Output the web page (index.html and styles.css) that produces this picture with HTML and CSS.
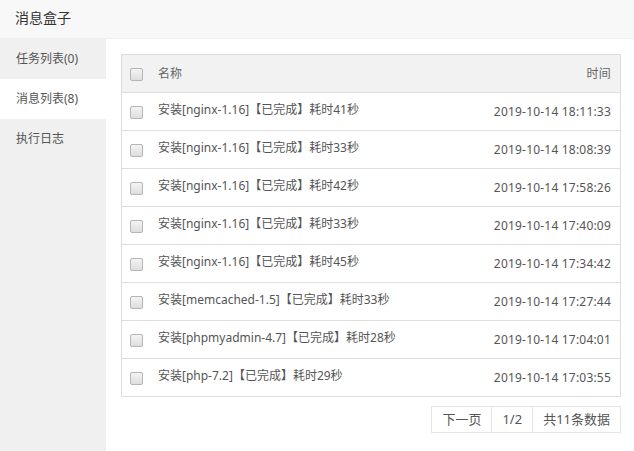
FILE: index.html
```html
<!DOCTYPE html>
<html lang="zh-CN">
<head>
<meta charset="UTF-8">
<title>消息盒子</title>
<link rel="stylesheet" href="styles.css">
</head>
<body>
  <!-- 消息盒子弹窗 -->
  <div class="msgbox">
    <div class="msgbox-title">消息盒子</div>
    <div class="msgbox-body">
      <!-- 左侧菜单 -->
      <ul class="msgbox-menu">
        <li>任务列表(0)</li>
        <li class="active">消息列表(8)</li>
        <li>执行日志</li>
      </ul>
      <!-- 消息列表 -->
      <div class="msgbox-content">
        <table class="msg-table">
          <thead>
            <tr>
              <th class="col-check"><span class="checkbox"></span></th>
              <th>名称</th>
              <th class="col-time">时间</th>
            </tr>
          </thead>
          <tbody>
            <tr>
              <td class="col-check"><span class="checkbox"></span></td>
              <td class="col-name">安装[nginx-1.16]【已完成】耗时41秒</td>
              <td class="col-time">2019-10-14 18:11:33</td>
            </tr>
            <tr>
              <td class="col-check"><span class="checkbox"></span></td>
              <td class="col-name">安装[nginx-1.16]【已完成】耗时33秒</td>
              <td class="col-time">2019-10-14 18:08:39</td>
            </tr>
            <tr>
              <td class="col-check"><span class="checkbox"></span></td>
              <td class="col-name">安装[nginx-1.16]【已完成】耗时42秒</td>
              <td class="col-time">2019-10-14 17:58:26</td>
            </tr>
            <tr>
              <td class="col-check"><span class="checkbox"></span></td>
              <td class="col-name">安装[nginx-1.16]【已完成】耗时33秒</td>
              <td class="col-time">2019-10-14 17:40:09</td>
            </tr>
            <tr>
              <td class="col-check"><span class="checkbox"></span></td>
              <td class="col-name">安装[nginx-1.16]【已完成】耗时45秒</td>
              <td class="col-time">2019-10-14 17:34:42</td>
            </tr>
            <tr>
              <td class="col-check"><span class="checkbox"></span></td>
              <td class="col-name">安装[memcached-1.5]【已完成】耗时33秒</td>
              <td class="col-time">2019-10-14 17:27:44</td>
            </tr>
            <tr>
              <td class="col-check"><span class="checkbox"></span></td>
              <td class="col-name">安装[phpmyadmin-4.7]【已完成】耗时28秒</td>
              <td class="col-time">2019-10-14 17:04:01</td>
            </tr>
            <tr>
              <td class="col-check"><span class="checkbox"></span></td>
              <td class="col-name">安装[php-7.2]【已完成】耗时29秒</td>
              <td class="col-time">2019-10-14 17:03:55</td>
            </tr>
          </tbody>
        </table>
        <!-- 分页 -->
        <div class="page">
          <span>下一页</span>
          <span>1/2</span>
          <span>共11条数据</span>
        </div>
      </div>
    </div>
  </div>
</body>
</html>
```

FILE: styles.css
```css
/* 基础样式 */
html, body {
  margin: 0;
  padding: 0;
  height: 100%;
  background: #fff;
  font-family: "Noto Sans", "Noto Sans CJK SC", sans-serif;
  color: #555;
}
.msgbox {
  display: flex;
  flex-direction: column;
  height: 451px;
}
.msgbox-title {
  height: 38px;
  line-height: 36px;
  padding-left: 15px;
  font-size: 14px;
  color: #333;
  background: #f8f8f8;
  border-bottom: 1px solid #eee;
}
.msgbox-body {
  flex: 1;
  display: flex;
}
/* 左侧菜单 */
.msgbox-menu {
  width: 106px;
  margin: 0;
  padding: 0;
  list-style: none;
  background: #f0f0f0;
}
.msgbox-menu li {
  height: 40px;
  line-height: 39px;
  padding-left: 16px;
  font-size: 12px;
  color: #555;
}
.msgbox-menu li.active {
  background: #fff;
}
/* 右侧内容 */
.msgbox-content {
  flex: 1;
  padding: 15px 13px 0 15px;
}
.msg-table {
  width: 100%;
  border-collapse: collapse;
  font-size: 12px;
  line-height: 16px;
  border: 1px solid #ddd;
}
.msg-table th,
.msg-table td {
  height: 37px;
  padding: 0 9px 0 0;
  border-top: 1px solid #ddd;
  text-align: left;
  font-weight: normal;
  color: #555;
}
.msg-table th {
  background: #f2f2f2;
  color: #666;
}
.msg-table .col-check {
  width: 28px;
  padding: 0 0 0 8px;
}
.msg-table .col-name {
  position: relative;
  top: -2px;
}
.msg-table .col-time {
  text-align: right;
  letter-spacing: 0.2px;
}
.checkbox {
  display: block;
  width: 11px;
  height: 11px;
  border: 1px solid #b5b5b5;
  border-radius: 2px;
  background: linear-gradient(#f4f4f4, #dedede);
  margin-top: 2px;
}
/* 分页 */
.page {
  display: flex;
  justify-content: flex-end;
  margin-top: 9px;
  font-size: 13px;
  color: #555;
}
.page span {
  height: 25px;
  line-height: 25px;
  padding: 0 10px;
  border: 1px solid #e6e6e6;
  margin-left: -1px;
}
```
